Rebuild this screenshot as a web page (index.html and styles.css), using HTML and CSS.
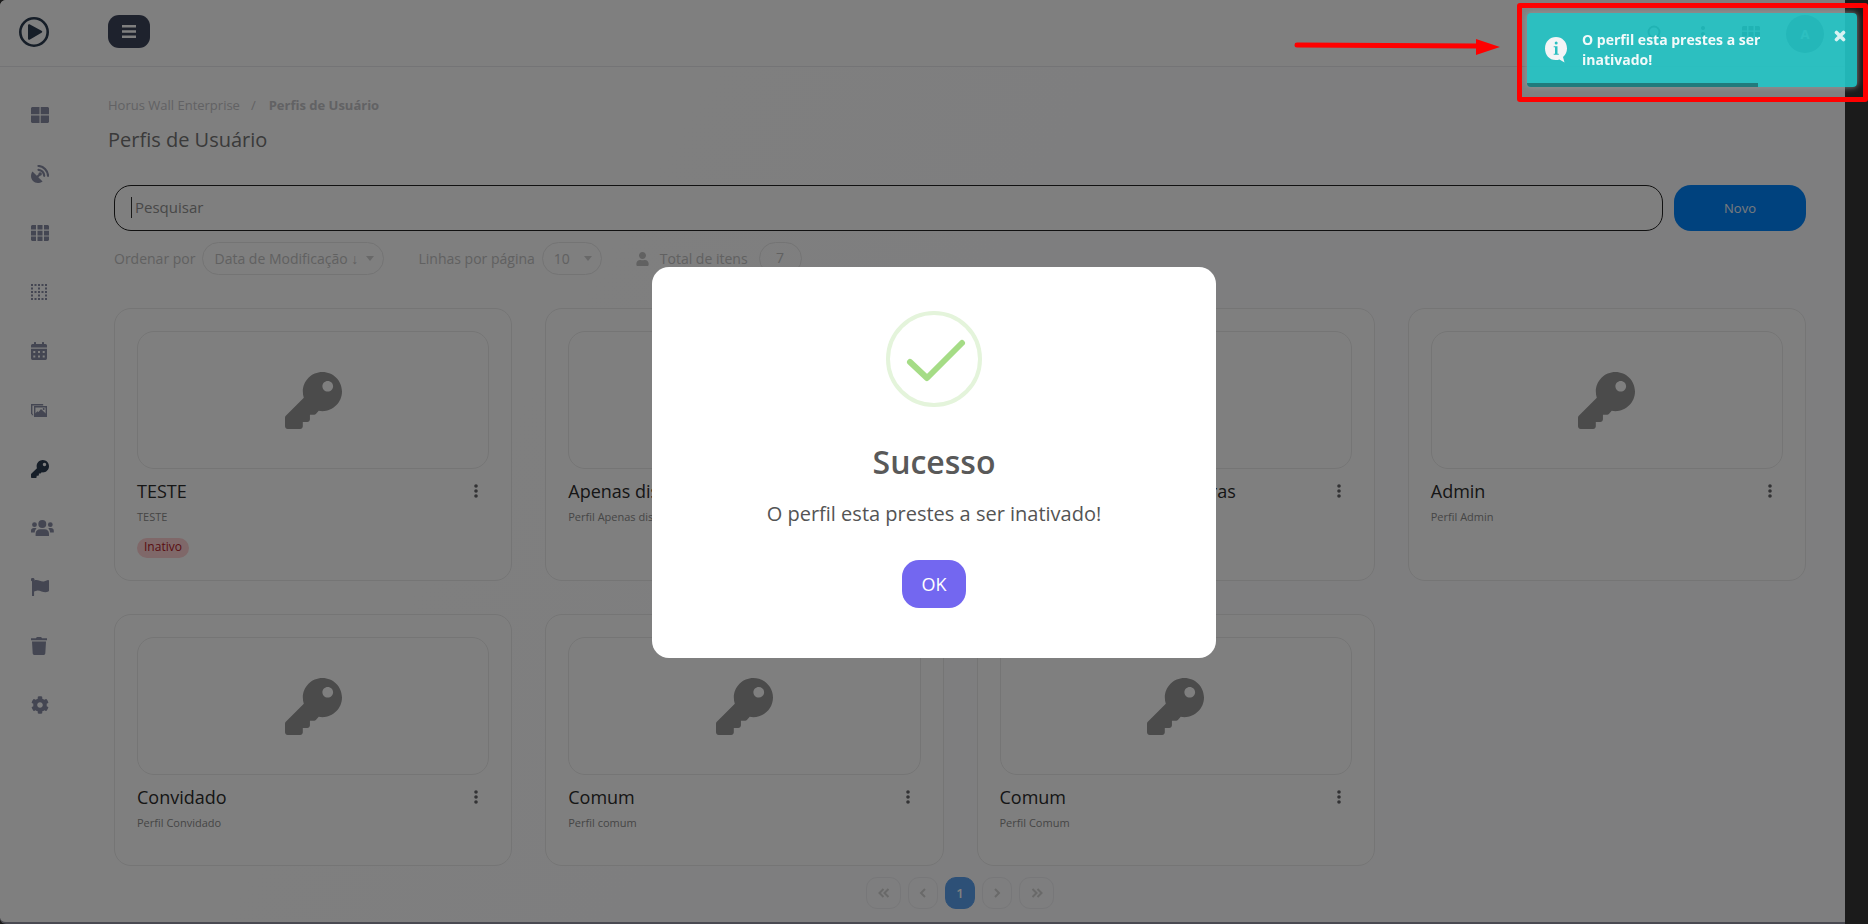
FILE: index.html
```html
<!DOCTYPE html>
<html lang="pt-BR">
<head>
<meta charset="utf-8">
<title>Perfis de Usuário</title>
<link rel="stylesheet" href="styles.css">
</head>
<body>
<svg class="defs" aria-hidden="true">
  <symbol id="key" viewBox="0 0 512 512"><path d="M512 176.001C512 273.203 433.202 352 336 352c-11.22 0-22.19-1.062-32.827-3.069l-24.012 27.014A23.999 23.999 0 0 1 261.223 384H224v40c0 13.255-10.745 24-24 24h-40v40c0 13.255-10.745 24-24 24H24c-13.255 0-24-10.745-24-24v-78.059c0-6.365 2.529-12.47 7.029-16.971l161.802-161.802C163.108 213.814 160 195.271 160 176 160 78.798 238.797.001 335.999 0 433.488-.001 512 78.511 512 176.001zM336 128c0 26.51 21.49 48 48 48s48-21.49 48-48-21.49-48-48-48-48 21.49-48 48z"/></symbol>
  <symbol id="dots" viewBox="0 0 4 14"><circle cx="2" cy="2" r="1.8"/><circle cx="2" cy="7" r="1.8"/><circle cx="2" cy="12" r="1.8"/></symbol>
  <symbol id="grid" viewBox="0 0 18 16"><path d="M1 0h4v4.6H0V1zM6.5 0h5v4.6h-5zM13 0h4l1 1v3.6h-5zM0 5.8h5v4.6H0zM6.500 5.800h5v4.600h-5zM13 5.800h5v4.600h-5zM0 11.500h5V16H1l-1-1zM6.500 11.500h5V16h-5zM13 11.500h5V15l-1 1h-4z"/></symbol>
</svg>

<div class="app">
  <header class="topbar">
    <a class="logo" href="#" aria-label="Início"><svg viewBox="0 0 30 30"><circle cx="15" cy="15" r="13.700" fill="none" stroke="currentColor" stroke-width="2.600"/><path d="M9 8.500c0-1 1-1.500 2-1l11.500 6.300c1 .6 1 1.400 0 2L11 22.500c-1 .6-2 0-2-1z" fill="currentColor"/></svg></a>
    <button class="menu" aria-label="Menu"><svg viewBox="0 0 14 13"><path d="M0 0h14v2.500H0zM0 5.200h14v2.500H0zM0 10.400h14V13H0z"/></svg></button>
    <div class="tools">
      <button class="tool" aria-label="Buscar"><svg class="line" viewBox="0 0 18 18"><circle cx="8" cy="7" r="5.500"/><path d="M12 11l4 5"/></svg></button>
      <button class="tool" aria-label="Mais"><svg viewBox="0 0 18 18"><circle cx="9" cy="3" r="2"/><circle cx="9" cy="9" r="2"/><circle cx="9" cy="15" r="2"/></svg></button>
      <button class="tool" aria-label="Aplicativos"><svg><use href="#grid"/></svg></button>
      <button class="avatar">A</button>
    </div>
  </header>

  <div class="body">
    <nav class="side">
      <a href="#" aria-label="Painel"><svg viewBox="0 0 18 18"><path d="M1 1h7.500v7.200H0V2zM9.700 1H17l1 1v6.200H9.700zM0 9.600h8.500V17H1l-1-1zM9.700 9.600H18V16l-1 1H9.700z"/></svg></a>
      <a href="#" aria-label="Antenas"><svg viewBox="0 0 18 18"><path d="M1.500 6.500l4.300 4.300 1.700-1.600a1.700 1.700 0 1 1 1.500 1.500l-1.700 1.600 4.300 4.200C7.500 19 4 18 2 16 0 14 -1 10 1.500 6.500z"/><path d="M7.500 1c5 .2 9.300 4.500 9.500 9.800M7.500 4.800c3 .2 5.500 2.700 5.700 6" fill="none" stroke="currentColor" stroke-width="2.200" stroke-linecap="round"/></svg></a>
      <a href="#" aria-label="Mosaicos"><svg viewBox="0 -1 18 18"><use href="#grid" width="18" height="16"/></svg></a>
      <a href="#" aria-label="Layouts"><svg viewBox="0 0 18 18"><path d="M0 2h16M0 9h16M0 16h16" stroke="currentColor" stroke-width="2" stroke-dasharray="2 1.500"/><path d="M0 5.500h16M0 12.500h16" stroke="currentColor" stroke-width="2" stroke-dasharray="2 5"/></svg></a>
      <a href="#" aria-label="Agenda"><svg viewBox="0 0 18 18"><path fill-rule="evenodd" d="M1.500 2H3V.5q0-.5.5-.5h1q.5 0 .5.500V2h6V.5q0-.5.5-.5h1q.5 0 .5.500V2h1.500Q16 2 16 3.500V5.500H0V3.500Q0 2 1.500 2zM0 6.700h16v9.600q0 1.700-1.500 1.700h-13Q0 18 0 16.300zM2.300 9v2h2V9zM7 9v2h2V9zM11.700 9v2h2V9zM2.300 13.500v2h2v-2zM7 13.500v2h2v-2zM11.700 13.500v2h2v-2z"/></svg></a>
      <a href="#" aria-label="Imagens"><svg viewBox="0 0 18 18"><path d="M.7 13V3.700h11.500M3.700 5.700h11.600v9.600H3.700z" fill="none" stroke="currentColor" stroke-width="1.400"/><path d="M.7 12v2.200h2M4 15v-2.500l2.500-2.200 1 .8 2.500-3.200L15.300 13v2z"/><circle cx="12.700" cy="8" r="1"/></svg></a>
      <a href="#" class="active" aria-label="Perfis"><svg><use href="#key"/></svg></a>
      <a href="#" aria-label="Usuários"><svg class="wide" viewBox="0 0 23 18"><circle cx="11.300" cy="5" r="4"/><circle cx="3.500" cy="5.700" r="2.400"/><circle cx="19.300" cy="5.700" r="2.400"/><path d="M4.600 17v-2.300c0-3 2-4.500 4.400-4.500h4.600c2.600 0 4.400 1.500 4.400 4.500V17zM0 13.500v-1.700C0 10 1.200 9 2.800 9h1.800l1 .5C4.300 10.500 3.800 12 3.700 13.500zM22.800 13.500v-1.700c0-1.800-1.200-2.800-2.800-2.800h-1.800l-1 .5c1.300 1 1.800 2.500 1.900 4z"/></svg></a>
      <a href="#" aria-label="Marcadores"><svg viewBox="0 0 18 18"><path d="M1 3.300a1.800 1.800 0 1 1 2.300-.8C7 1 10 4.300 13.500 3.300l3.500-1.200q1-.2 1 .8v9.700q0 .7-.6 1c-4 2.200-7.500-1.200-11-1l-3.300.8V17.500q0 .5-.5.5H1.500q-.5 0-.5-.5z"/></svg></a>
      <a href="#" aria-label="Lixeira"><svg viewBox="0 0 18 18"><path d="M0 1.200h5L5.600.300Q5.800 0 6.200 0h3.600q.4 0 .6.300L11 1.200h5v2H0zM1 4.600h14l-.7 12q-.1 1.400-1.500 1.400H3.200q-1.400 0-1.500-1.400z"/></svg></a>
      <a href="#" aria-label="Configurações"><svg viewBox="0 0 512 512"><path d="M487.4 315.7l-42.6-24.6c4.3-23.2 4.3-47 0-70.2l42.6-24.6c4.9-2.8 7.1-8.6 5.5-14-11.1-35.6-30-67.8-54.7-94.6-3.8-4.1-10-5.1-14.8-2.3L380.8 110c-17.900-15.400-38.500-27.300-60.800-35.100V25.800c0-5.600-3.900-10.500-9.400-11.700-36.700-8.200-74.300-7.800-109.200 0-5.500 1.200-9.400 6.100-9.400 11.700V75c-22.200 7.900-42.800 19.800-60.800 35.100L88.700 85.500c-4.900-2.800-11-1.900-14.800 2.300-24.700 26.700-43.600 58.900-54.700 94.600-1.700 5.400.6 11.200 5.500 14L67.300 221c-4.300 23.200-4.300 47 0 70.200l-42.600 24.600c-4.900 2.800-7.100 8.600-5.500 14 11.100 35.600 30 67.800 54.700 94.600 3.800 4.100 10 5.100 14.800 2.300l42.600-24.600c17.900 15.400 38.500 27.300 60.800 35.100v49.200c0 5.600 3.900 10.500 9.400 11.700 36.700 8.200 74.300 7.800 109.200 0 5.500-1.200 9.400-6.100 9.400-11.700v-49.200c22.200-7.900 42.800-19.800 60.800-35.100l42.600 24.600c4.900 2.800 11 1.900 14.800-2.300 24.700-26.700 43.600-58.900 54.700-94.600 1.500-5.500-.7-11.300-5.600-14.100zM256 336c-44.100 0-80-35.900-80-80s35.900-80 80-80 80 35.900 80 80-35.900 80-80 80z"/></svg></a>
    </nav>

    <main class="content">
      <nav class="crumbs" aria-label="Trilha"><a href="#">Horus Wall Enterprise</a><span>/</span><strong>Perfis de Usuário</strong></nav>
      <h1 class="title">Perfis de Usuário</h1>

      <div class="inner">
        <div class="searchrow">
          <div class="searchbox"><input type="text" placeholder="Pesquisar" aria-label="Pesquisar"><span class="caret"></span></div>
          <button class="new">Novo</button>
        </div>

        <div class="filters">
          <div class="filter"><label for="order">Ordenar por</label><span class="pick order"><select id="order"><option>Data de Modificação ↓</option></select></span></div>
          <div class="filter"><label for="rows">Linhas por página</label><span class="pick rows"><select id="rows"><option>10</option></select></span></div>
          <div class="filter total"><svg viewBox="0 0 448 512"><path d="M224 256c70.700 0 128-57.300 128-128S294.700 0 224 0 96 57.300 96 128s57.300 128 128 128zm89.600 32h-16.700c-22.200 10.200-46.900 16-72.900 16s-50.600-5.800-72.900-16h-16.700C60.200 288 0 348.200 0 422.400V464c0 26.500 21.500 48 48 48h352c26.500 0 48-21.500 48-48v-41.600c0-74.200-60.200-134.400-134.400-134.400z"/></svg><span>Total de itens</span><output class="count">7</output></div>
        </div>

        <section class="cards">
          <article class="card"><div class="thumb"><svg><use href="#key"/></svg></div><div class="head"><h2>TESTE</h2><button class="more" aria-label="Opções"><svg><use href="#dots"/></svg></button></div><p>TESTE</p><span class="badge">Inativo</span></article>
          <article class="card"><div class="thumb"><svg><use href="#key"/></svg></div><div class="head"><h2>Apenas dispositivos</h2><button class="more" aria-label="Opções"><svg><use href="#dots"/></svg></button></div><p>Perfil Apenas dispositivos</p></article>
          <article class="card"><div class="thumb"><svg><use href="#key"/></svg></div><div class="head"><h2>Apenas mosaicos e câmeras</h2><button class="more" aria-label="Opções"><svg><use href="#dots"/></svg></button></div></article>
          <article class="card"><div class="thumb"><svg><use href="#key"/></svg></div><div class="head"><h2>Admin</h2><button class="more" aria-label="Opções"><svg><use href="#dots"/></svg></button></div><p>Perfil Admin</p></article>
          <article class="card"><div class="thumb"><svg><use href="#key"/></svg></div><div class="head"><h2>Convidado</h2><button class="more" aria-label="Opções"><svg><use href="#dots"/></svg></button></div><p>Perfil Convidado</p></article>
          <article class="card"><div class="thumb"><svg><use href="#key"/></svg></div><div class="head"><h2>Comum</h2><button class="more" aria-label="Opções"><svg><use href="#dots"/></svg></button></div><p>Perfil comum</p></article>
          <article class="card"><div class="thumb"><svg><use href="#key"/></svg></div><div class="head"><h2>Comum</h2><button class="more" aria-label="Opções"><svg><use href="#dots"/></svg></button></div><p>Perfil Comum</p></article>
        </section>

        <nav class="pages" aria-label="Páginas">
          <button class="far" aria-label="Primeira"><svg viewBox="0 0 12 10"><path d="M5.500 1l-4 4 4 4M10.500 1l-4 4 4 4"/></svg></button>
          <button aria-label="Anterior"><svg viewBox="0 0 12 10"><path d="M8 1L4 5l4 4"/></svg></button>
          <button class="current">1</button>
          <button aria-label="Próxima"><svg viewBox="0 0 12 10"><path d="M4 1l4 4-4 4"/></svg></button>
          <button class="far" aria-label="Última"><svg viewBox="0 0 12 10"><path d="M1.500 1l4 4-4 4M6.500 1l4 4-4 4"/></svg></button>
        </nav>
      </div>
    </main>
  </div>
</div>

<div class="overlay">
  <div class="modal" role="dialog" aria-labelledby="modal-title">
    <svg class="ok-icon" viewBox="0 0 96 96"><circle cx="48" cy="48" r="46" stroke="#e4f4db" stroke-width="4"/><path d="M24 51l17 16 35-35" stroke="#a5dc86" stroke-width="6" stroke-linecap="round" stroke-linejoin="round"/></svg>
    <h2 id="modal-title">Sucesso</h2>
    <p>O perfil esta prestes a ser inativado!</p>
    <button>OK</button>
  </div>
</div>

<div class="callout">
  <div class="toast" role="alert">
    <svg class="info" viewBox="0 0 22 26"><path d="M11 0C17 0 22 4.500 22 11.500c0 3.500-1.500 6.500-4 8.500l1.500 5.500-5-3C6 25 0 19 0 11.500 0 4.500 5 0 11 0z" fill="#f4f4f6"/><circle cx="11.200" cy="6" r="1.500" fill="#2cbfc1"/><path d="M8.700 9.300h3.800v7.400h1.300v1H8.700v-1H10v-6.400H8.700z" fill="#2cbfc1"/></svg>
    <span class="message">O perfil esta prestes a ser inativado!</span>
    <button class="close" aria-label="Fechar"><svg viewBox="0 0 12 12"><path d="M2.500 2.500l7 7M9.500 2.500l-7 7" stroke="currentColor" stroke-width="3.600" stroke-linecap="round"/></svg></button>
    <span class="progress"></span>
  </div>
</div>
<svg class="arrow" viewBox="0 0 206 16"><path d="M3 6l180 1" stroke="#f00" stroke-width="5" stroke-linecap="round"/><path d="M182 0l24 8-24 8z" fill="#f00"/></svg>
</body>
</html>
```
FILE: styles.css
```css
* { box-sizing: border-box; }
html { background: #363636; }
body { margin: 0; font-family: "Open Sans", "Noto Sans", sans-serif; font-size: 14px; }
button, input, select { font: inherit; margin: 0; }
button { border: 0; padding: 0; background: none; }
a { color: inherit; text-decoration: none; }
svg { fill: currentColor; display: block; }
h1, h2, p { margin: 0; }
.defs { position: absolute; width: 0; height: 0; }
.line { fill: none; stroke: currentColor; stroke-width: 2; }

.app {
  margin-right: 23px;
  min-height: 100vh;
  border-bottom: 2px solid #9494a4;
  border-radius: 6px 0 0 6px;
  background: linear-gradient(120deg, #fff 15%, #fcfcff 65%);
}
.topbar { height: 67px; display: flex; align-items: flex-start; background: #fff; border-bottom: 1px solid #e8e8ec; border-radius: 6px 0 0 0; }
.logo { width: 30px; margin: 17px 59px 0 19px; color: #2c3c50; }
.logo svg { width: 30px; height: 30px; }
.menu { width: 42px; height: 33px; margin-top: 15px; border-radius: 11px; background: #3d455b; color: #fff; display: grid; place-items: center; }
.menu svg { width: 14px; height: 13px; }
.tools { margin: 15px 21px 0 auto; display: flex; align-items: center; gap: 30px; color: #55596a; }
.tool svg { width: 18px; height: 18px; }
.avatar { width: 38px; height: 38px; margin-left: -4px; border-radius: 50%; background: #55596a; color: #fff; font-weight: 700; font-size: 13px; }

.body { display: flex; }
.side { width: 108px; padding: 39px 0 0 31px; display: flex; flex-direction: column; gap: 41px; color: #888ca4; }
.side svg { width: 18px; height: 18px; }
.side .wide { width: 23px; }
.side .active { color: #2c3c50; }

.content { flex: 1; min-width: 0; padding-right: 39px; }
.crumbs { margin-top: 28px; font-size: 13px; line-height: 20px; color: #c4c4c8; display: flex; }
.crumbs span { margin: 0 13px 0 11px; }
.title { margin-top: 10px; font-size: 20px; line-height: 30px; font-weight: 400; color: #747474; }
.inner { padding-left: 6px; }

.searchrow { margin-top: 30px; display: flex; gap: 11px; }
.searchbox { flex: 1; position: relative; }
.searchbox input { width: 100%; height: 46px; padding: 0 20px 2px; border: 1px solid #222; border-radius: 17px; background: #fff; outline: 0; font-size: 15px; }
.searchbox input::placeholder { color: #909090; opacity: 1; }
.caret { position: absolute; left: 17px; top: 12px; width: 1px; height: 21px; background: #333; }
.new { width: 132px; height: 46px; border-radius: 17px; background: #0084fc; color: #f0f4fa; font-size: 13px; }

.filters { margin-top: 11px; display: flex; color: #c2c2c2; gap: 34px; line-height: 31px; }
.filter { display: flex; align-items: center; gap: 7px; }
.pick { position: relative; }
.pick select { appearance: none; height: 33px; border: 1px solid #e8e8e8; border-radius: 17px; background: transparent; color: #c2c2c2; padding: 0 11px 2px; display: block; width: 100%; }
.order { width: 182px; }
.rows { width: 60px; }
.pick::after { content: ""; position: absolute; right: 10px; top: 14px; border: 4px solid transparent; border-top: 5px solid #d0d0d0; border-bottom: 0; }
.total { gap: 11px; }
.total svg { width: 13px; height: 14px; }
.count { width: 43px; height: 33px; border: 1px solid #e8e8e8; border-radius: 17px; text-align: center; line-height: 30px; }

.cards { margin-top: 33px; display: grid; grid-template-columns: repeat(4, minmax(0, 1fr)); gap: 33px; }
.card { min-height: 252px; padding: 22px 22px 22px; border: 1px solid #ebebeb; border-radius: 17px; background: #fff; }
.thumb { height: 138px; border: 1px solid #ebebeb; border-radius: 17px; display: grid; place-items: center; color: #979797; }
.thumb svg { width: 57px; height: 57px; }
.head { margin-top: 10px; display: flex; justify-content: space-between; align-items: center; }
.head h2 { font-size: 18px; line-height: 24px; font-weight: 500; color: #2c2c2c; }
.more { padding: 0 11px; color: #66666a; }
.more svg { width: 4px; height: 14px; }
.card p { margin-top: 6px; font-size: 11px; line-height: 16px; color: #8c8c8c; }
.badge { display: inline-block; margin-top: 13px; padding: 0 7px; height: 20px; border-radius: 10px; background: #ffd0d2; color: #b21a26; font-size: 12px; line-height: 18px; }

.pages { margin-top: 11px; padding-bottom: 13px; display: flex; justify-content: center; gap: 7px; }
.pages button { width: 30px; height: 32px; border: 1px solid #efeff2; border-radius: 11px; background: #fdfdfe; color: #d2d2d2; display: grid; place-items: center; }
.pages .far { width: 35px; }
.pages svg { width: 12px; height: 10px; fill: none; stroke: currentColor; stroke-width: 2; }
.pages .current { background: #5ba1ef; border-color: #5ba1ef; color: #fff; font-size: 13px; font-weight: 600; }

.overlay { position: fixed; inset: 0; background: rgba(0, 0, 0, .5); display: grid; place-items: center; }
.modal { width: 564px; padding: 44px 20px 50px; border-radius: 17px; background: #fff; color: #545454; display: flex; flex-direction: column; align-items: center; }
.ok-icon { width: 96px; height: 96px; fill: none; }
.modal h2 { margin-top: 31px; font-size: 32px; line-height: 48px; font-weight: 600; color: #595959; }
.modal p { margin-top: 13px; font-size: 20px; line-height: 30px; }
.modal button { margin-top: 31px; width: 64px; height: 48px; border-radius: 17px; background: #7367f0; color: #fff; font-size: 18px; }

.callout { position: fixed; top: 3px; right: 0; width: 351px; padding: 5px 6px 10px 5px; border: 5px solid #f00; border-radius: 3px; }
.toast { position: relative; min-height: 74px; padding: 17px 11px 17px 18px; display: flex; align-items: flex-start; border-radius: 4px; background: rgba(35, 198, 200, .9); box-shadow: 0 0 6px rgba(160, 160, 160, .8); color: #f2fafa; overflow: hidden; }
.info { width: 22px; height: 26px; margin: 7px 15px 0 0; }
.message { flex: 1; font-size: 14px; line-height: 20px; font-weight: 700; }
.close { color: #d8f2f2; }
.close svg { width: 12px; height: 12px; }
.progress { position: absolute; left: 0; bottom: 0; width: 70%; height: 4px; background: #217b7c; }
.arrow { position: fixed; top: 39px; right: 368px; width: 206px; height: 16px; }
```
